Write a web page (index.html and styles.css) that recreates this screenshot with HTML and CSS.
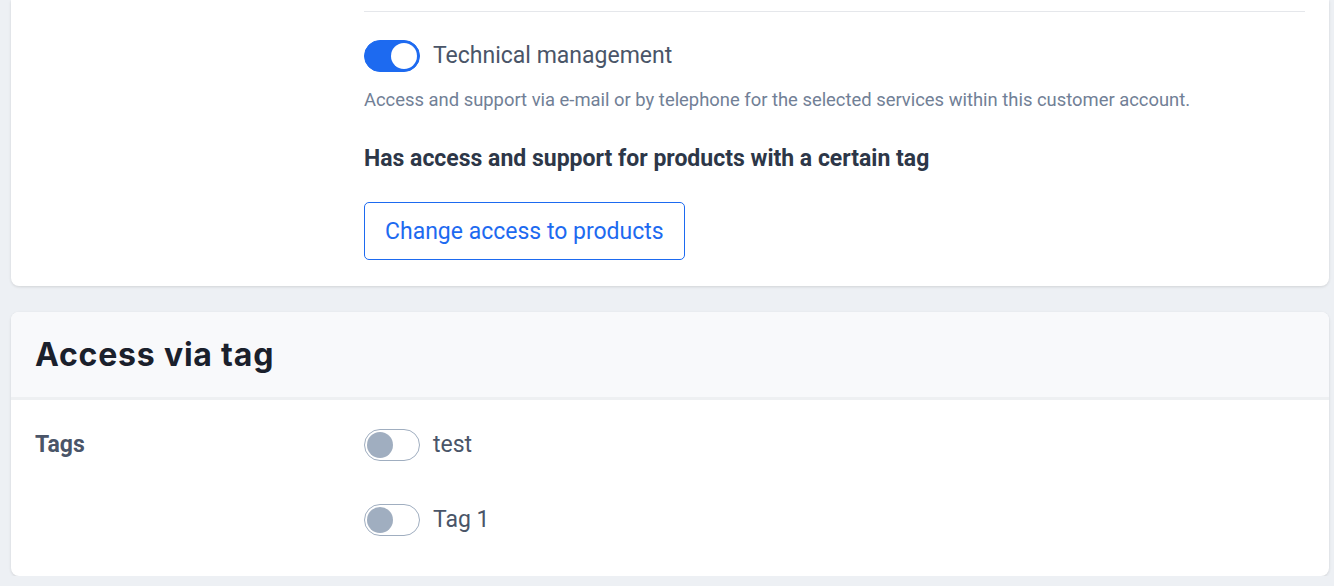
FILE: index.html
```html
<!DOCTYPE html>
<html lang="en">
<head>
	<meta charset="UTF-8">
	<title>Access</title>
	<link rel="stylesheet" href="styles.css">
</head>
<body>
<div class="page">
	<div class="card card-cut">
		<div class="row">
			<div class="label"></div>
			<div class="field field-top">
				<label class="switch-line">
					<span class="switch on"><span class="knob"></span></span>
					<span class="switch-text">Technical management</span>
				</label>
				<p class="hint">Access and support via e-mail or by telephone for the selected services within this customer account.</p>
				<h4 class="sub">Has access and support for products with a certain tag</h4>
				<button class="btn-outline">Change access to products</button>
			</div>
		</div>
	</div>

	<div class="card">
		<div class="card-head">
			<h2>Access via tag</h2>
		</div>
		<div class="row row-body">
			<div class="label">Tags</div>
			<div class="field tag-list">
				<label class="switch-line">
					<span class="switch"><span class="knob"></span></span>
					<span class="switch-text">test</span>
				</label>
				<label class="switch-line">
					<span class="switch"><span class="knob"></span></span>
					<span class="switch-text">Tag 1</span>
				</label>
			</div>
		</div>
	</div>
</div>
</body>
</html>
```

FILE: styles.css
```css
*{
	box-sizing: border-box;
}
body{
	margin: 0;
	background: #edf0f4;
	font-family: Roboto, "Liberation Sans", Arial, sans-serif;
	color: #4a5568;
}
.page{
	padding: 0 5px 0 11px;
	display: flex;
	flex-direction: column;
	gap: 26px;
}
.card{
	background: #fff;
	border-radius: 8px;
	box-shadow: 0 1px 3px rgba(0,0,0,0.12);
	overflow: hidden;
}
.card-cut{
	border-radius: 0 0 8px 8px;
}
.row{
	display: grid;
	grid-template-columns: 329px 1fr;
	padding: 0 24px;
}
.card-cut .row{
	padding-top: 11px;
	padding-bottom: 26px;
}
.field-top{
	border-top: 1px solid #e5e7eb;
	padding-top: 28px;
}
.label{
	font-weight: 700;
	font-size: 23px;
	line-height: 32px;
	color: #4a5568;
}
.switch-line{
	display: flex;
	align-items: center;
	gap: 13px;
	cursor: pointer;
}
.switch{
	width: 56px;
	height: 32px;
	border-radius: 16px;
	border: 1px solid #a0aec0;
	background: #fff;
	padding: 2px;
	display: flex;
	justify-content: flex-start;
	flex-shrink: 0;
}
.knob{
	width: 26px;
	height: 26px;
	border-radius: 50%;
	background: #a0aec0;
}
.switch.on{
	background: #1d6af0;
	border-color: #1d6af0;
	justify-content: flex-end;
}
.switch.on .knob{
	background: #fff;
}
.switch-text{
	font-size: 23px;
	line-height: 32px;
	color: #4a5568;
}
.hint{
	margin: 16px 0 0;
	font-size: 18.4px;
	line-height: 24px;
	color: #718096;
}
.sub{
	margin: 33px 0 0;
	font-size: 23px;
	line-height: 28px;
	font-weight: 700;
	color: #2d3748;
}
.btn-outline{
	display: block;
	margin-top: 29px;
	height: 58px;
	padding: 0 20px;
	border: 1px solid #1d6af0;
	border-radius: 5px;
	background: #fff;
	color: #1d6af0;
	font-family: inherit;
	font-size: 23px;
	cursor: pointer;
}
.card-head{
	background: #f8f9fb;
	border-bottom: 3px solid #eef0f2;
	height: 88px;
	display: flex;
	align-items: center;
	padding: 0 24px;
}
.card-head h2{
	margin: 0;
	font-family: Inter, "Open Sans", sans-serif;
	font-weight: 700;
	font-size: 32px;
	color: #1a202c;
	letter-spacing: 0.8px;
}
.row-body{
	padding-top: 29px;
	padding-bottom: 40px;
}
.tag-list{
	display: flex;
	flex-direction: column;
	gap: 43px;
}
```
